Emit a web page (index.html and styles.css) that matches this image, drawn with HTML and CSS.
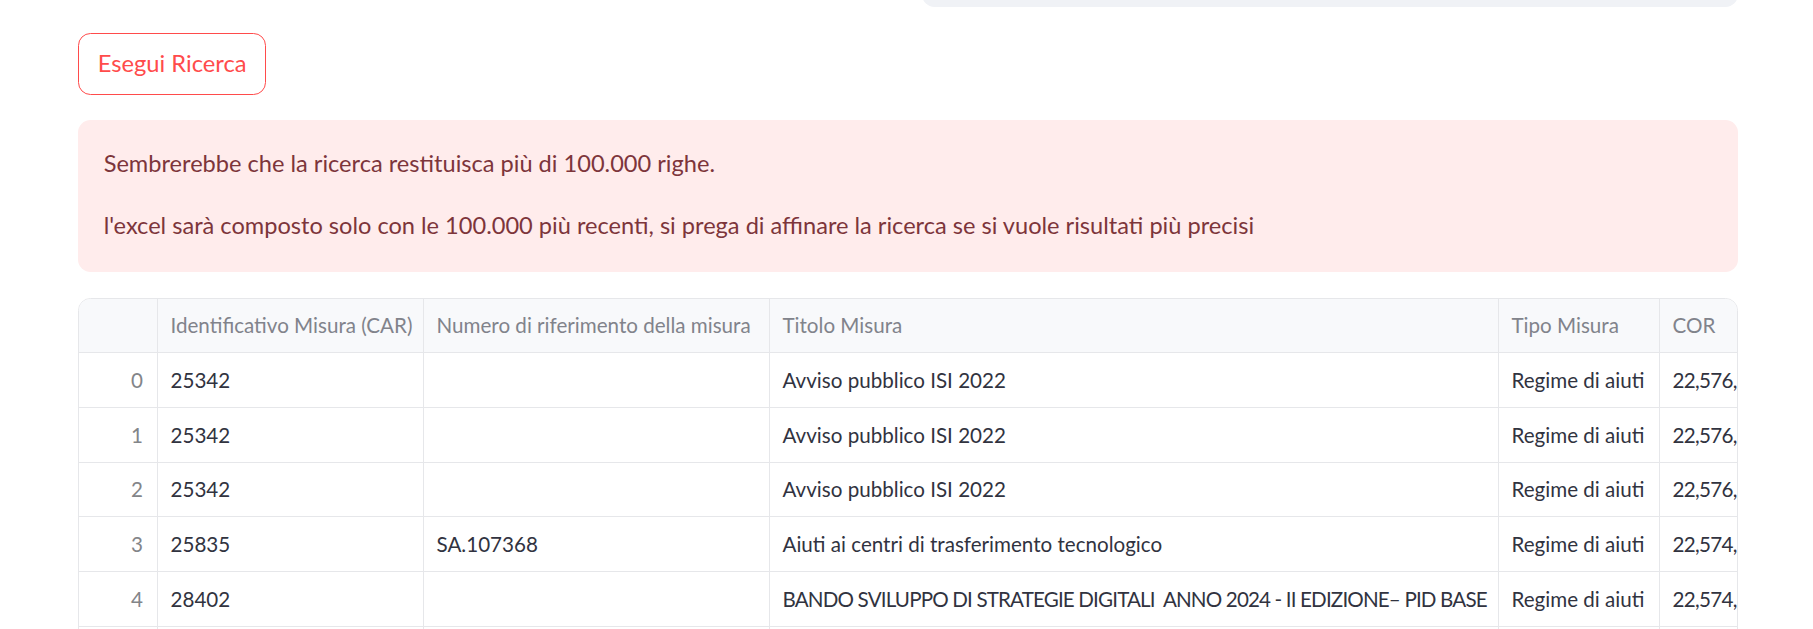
FILE: index.html
```html
<!DOCTYPE html>
<html lang="it">
<head>
<meta charset="utf-8">
<title>Ricerca</title>
<link rel="stylesheet" href="styles.css">
</head>
<body>
<main class="main">
  <div class="topbar">
    <div class="input-tail"></div>
  </div>
  <div class="btn-row">
    <button class="btn" type="button">Esegui Ricerca</button>
  </div>
  <div class="alert">
    <p>Sembrerebbe che la ricerca restituisca più di 100.000 righe.</p>
    <p>l'excel sarà composto solo con le 100.000 più recenti, si prega di affinare la ricerca se si vuole risultati più precisi</p>
  </div>
  <div class="grid">
    <div class="row head">
      <div class="cell idx"></div>
      <div class="cell">Identificativo Misura (CAR)</div>
      <div class="cell">Numero di riferimento della misura</div>
      <div class="cell">Titolo Misura</div>
      <div class="cell">Tipo Misura</div>
      <div class="cell">COR</div>
    </div>
    <div class="row">
      <div class="cell idx">0</div>
      <div class="cell">25342</div>
      <div class="cell"></div>
      <div class="cell">Avviso pubblico ISI 2022</div>
      <div class="cell">Regime di aiuti</div>
      <div class="cell num">22,576,720</div>
    </div>
    <div class="row">
      <div class="cell idx">1</div>
      <div class="cell">25342</div>
      <div class="cell"></div>
      <div class="cell">Avviso pubblico ISI 2022</div>
      <div class="cell">Regime di aiuti</div>
      <div class="cell num">22,576,719</div>
    </div>
    <div class="row">
      <div class="cell idx">2</div>
      <div class="cell">25342</div>
      <div class="cell"></div>
      <div class="cell">Avviso pubblico ISI 2022</div>
      <div class="cell">Regime di aiuti</div>
      <div class="cell num">22,576,718</div>
    </div>
    <div class="row">
      <div class="cell idx">3</div>
      <div class="cell">25835</div>
      <div class="cell">SA.107368</div>
      <div class="cell">Aiuti ai centri di trasferimento tecnologico</div>
      <div class="cell">Regime di aiuti</div>
      <div class="cell num">22,574,210</div>
    </div>
    <div class="row">
      <div class="cell idx">4</div>
      <div class="cell">28402</div>
      <div class="cell"></div>
      <div class="cell caps">BANDO SVILUPPO DI STRATEGIE DIGITALI  ANNO 2024 - II EDIZIONE– PID BASE</div>
      <div class="cell">Regime di aiuti</div>
      <div class="cell num">22,574,209</div>
    </div>
    <div class="row">
      <div class="cell idx">5</div>
      <div class="cell">28402</div>
      <div class="cell"></div>
      <div class="cell">Avviso pubblico</div>
      <div class="cell">Regime di aiuti</div>
      <div class="cell num">22,574,208</div>
    </div>
  </div>
</main>
</body>
</html>
```

FILE: styles.css
```css
* {
  box-sizing: border-box;
}

html, body {
  margin: 0;
  padding: 0;
  background: #ffffff;
}

body {
  font-family: "Lato", "Liberation Sans", sans-serif;
  color: #31333f;
  overflow: hidden;
}

.main {
  display: flex;
  flex-direction: column;
  gap: 25.3px;
  padding: 0 75px 0 78px;
}

.topbar {
  height: 7.3px;
  overflow: hidden;
  display: flex;
  justify-content: flex-end;
  align-items: flex-end;
}

.input-tail {
  width: 816px;
  height: 60px;
  flex: none;
  background: #f0f2f6;
  border-radius: 12.5px;
}

.btn-row {
  display: flex;
}

.btn {
  font-family: inherit;
  font-size: 23.7px;
  color: #ff4b4b;
  background: #ffffff;
  border: 1px solid #ff4b4b;
  border-radius: 12.5px;
  height: 62.4px;
  padding: 0 18.75px;
  line-height: 1;
  cursor: pointer;
}

.alert {
  background: #ffecec;
  color: #7d353b;
  border-radius: 12.5px;
  padding: 23px 25.7px 27px;
  display: flex;
  flex-direction: column;
  gap: 22px;
  font-size: 23.6px;
}

.alert p {
  margin: 0;
  line-height: 40px;
}

.grid {
  border: 1px solid #e6e7ea;
  border-radius: 12.5px;
  overflow: hidden;
  font-size: 20.6px;
}

.row {
  display: grid;
  grid-template-columns: 79px 266px 346px 729px 161px 260px;
  height: 54.7px;
  border-bottom: 1px solid #e6e7ea;
}

.cell {
  display: flex;
  align-items: center;
  padding: 0 12.5px;
  border-right: 1px solid #e6e7ea;
  white-space: nowrap;
  overflow: hidden;
}

.caps {
  white-space: pre;
  letter-spacing: -0.85px;
}

.num {
  letter-spacing: -0.7px;
}

.head {
  background: #f8f9fb;
  color: #81838b;
}

.idx {
  justify-content: flex-end;
  padding-right: 14px;
  color: #838589;
}
```
